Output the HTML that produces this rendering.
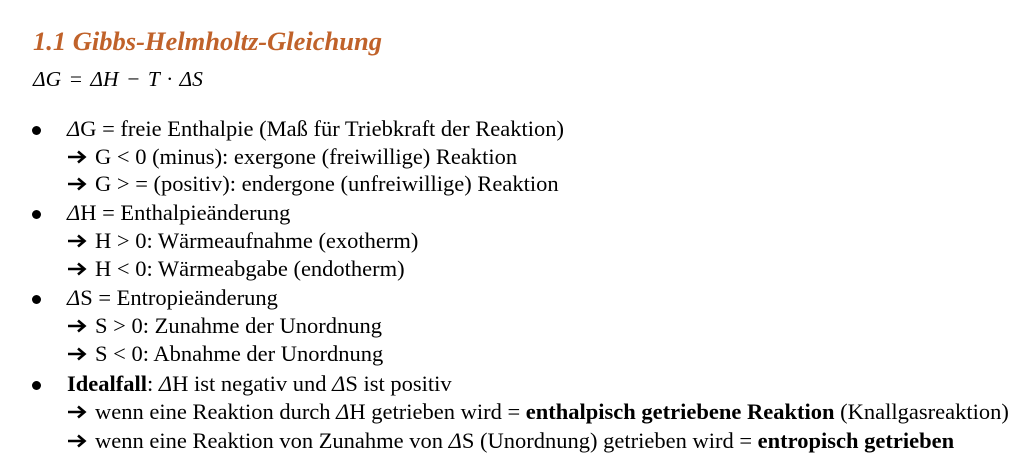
<!DOCTYPE html>
<html><head><meta charset="utf-8"><style>
body{margin:0;background:#fff;width:1024px;height:461px;overflow:hidden;font-family:"Liberation Serif",serif;color:#000}
.l{position:absolute;left:67px;font-size:22.5px;line-height:28px;white-space:nowrap}
.a{position:absolute;left:67px;font-size:22.5px;line-height:28px;white-space:nowrap}
.a svg{display:inline-block;width:20px;height:14px;margin-right:8px;vertical-align:0px}
.b{position:absolute;left:32px;width:12px;height:12px}
.b::after{content:"";position:absolute;left:0;top:0;width:9px;height:9px;border-radius:50%;background:#000}
.t{position:absolute;left:33px;top:26px;font-size:26.5px;font-weight:bold;font-style:italic;color:#C0622A}
.f{position:absolute;left:33px;top:67px;font-size:21.5px;font-style:italic;word-spacing:2px}
i{font-style:italic}
</style></head><body>
<div class="t">1.1 Gibbs-Helmholtz-Gleichung</div>
<div class="f"><i>ΔG</i> = <i>ΔH</i> − <i>T</i> · <i>ΔS</i></div>
<svg width="0" height="0" style="position:absolute"><defs><symbol id="ar" viewBox="0 0 20 14"><path d="M1 7H17M11 1.5L17.5 7L11 12.5" fill="none" stroke="#000" stroke-width="2.6"/></symbol></defs></svg>
<div class="b" style="top:126px"></div>
<div class="l" style="top:115px"><i>Δ</i>G = freie Enthalpie (Maß für Triebkraft der Reaktion)</div>
<div class="a" style="top:143px"><svg><use href="#ar"/></svg>G &lt; 0 (minus): exergone (freiwillige) Reaktion</div>
<div class="a" style="top:170px"><svg><use href="#ar"/></svg>G &gt; = (positiv): endergone (unfreiwillige) Reaktion</div>
<div class="b" style="top:210px"></div>
<div class="l" style="top:199px"><i>Δ</i>H = Enthalpieänderung</div>
<div class="a" style="top:227px"><svg><use href="#ar"/></svg>H &gt; 0: Wärmeaufnahme (exotherm)</div>
<div class="a" style="top:255px"><svg><use href="#ar"/></svg>H &lt; 0: Wärmeabgabe (endotherm)</div>
<div class="b" style="top:295px"></div>
<div class="l" style="top:284px"><i>Δ</i>S = Entropieänderung</div>
<div class="a" style="top:312px"><svg><use href="#ar"/></svg>S &gt; 0: Zunahme der Unordnung</div>
<div class="a" style="top:340px"><svg><use href="#ar"/></svg>S &lt; 0: Abnahme der Unordnung</div>
<div class="b" style="top:381px"></div>
<div class="l" style="top:370px"><b>Idealfall</b>: <i>Δ</i>H ist negativ und <i>Δ</i>S ist positiv</div>
<div class="a" style="top:398px"><svg><use href="#ar"/></svg>wenn eine Reaktion durch <i>Δ</i>H getrieben wird = <b>enthalpisch getriebene Reaktion</b> (Knallgasreaktion)</div>
<div class="a" style="top:427px"><svg><use href="#ar"/></svg>wenn eine Reaktion von Zunahme von <i>Δ</i>S (Unordnung) getrieben wird = <b>entropisch getrieben</b></div>
</body></html>
